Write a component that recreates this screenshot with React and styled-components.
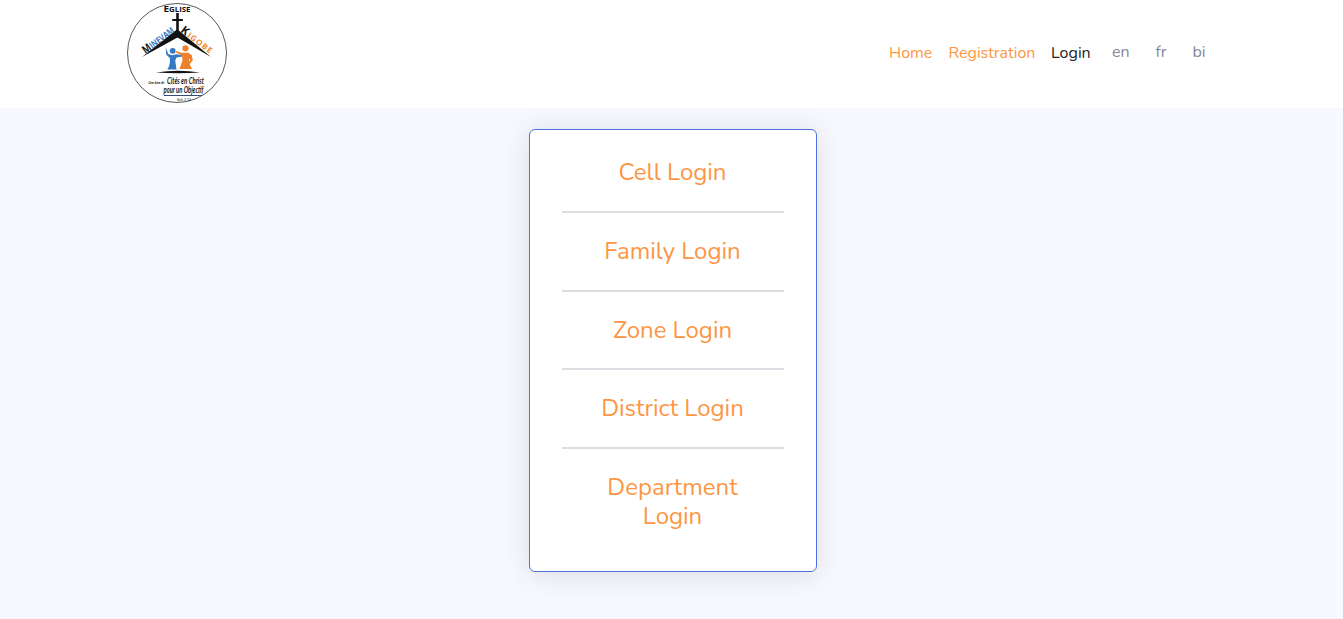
import React from "react";
import styled, { createGlobalStyle } from "styled-components";

const GlobalStyle = createGlobalStyle`
  * { box-sizing: border-box; }
  html, body { margin: 0; background: #f8f9ff; }
  body { font-family: Nunito, Lato, sans-serif; overflow: hidden; }
`;
const Page = styled.div`
  min-height: 619px;
  background: #f8f9ff;
`;
const Header = styled.header`
  height: 108px;
  padding: 3px 128px 0 127px;
  display: flex;
  justify-content: space-between;
  background: #fff;
`;
const Logo = styled.svg`
  display: block;
  width: 100px;
  height: 100px;
`;
const Nav = styled.nav`
  display: flex;
  align-items: flex-start;
  padding-top: 38px;
  width: 326px;
`;
const NavLink = styled.a`
  font-size: 16px;
  line-height: 24px;
  width: ${(p) => p.$width}px;
  color: ${(p) => p.$color || "#fd9644"};
  white-space: nowrap;
  text-decoration: none;
`;
const Language = styled(NavLink)`
  line-height: 22px;
  color: #858796;
`;
const Main = styled.main`
  display: flex;
  justify-content: center;
  padding: 21px 0 0 3px;
`;
const Card = styled.section`
  width: 288px;
  height: 443px;
  padding: 4px 32px 16px;
  border: 1px solid #4e73df;
  border-radius: 6px;
  background: #fff;
  box-shadow: 0 2.4px 28px rgba(58, 59, 69, 0.15);
`;
const LoginOption = styled.h4`
  margin: 0;
  padding: 24px 25px 24px 24px;
  border-bottom: ${(p) => (p.$last ? "0" : "2px solid #dddde3")};
  color: #fd9644;
  font-size: 24px;
  font-weight: 400;
  line-height: 28.8px;
  text-align: center;
`;

function ChurchLogo() {
  return (
    <Logo viewBox="0 0 100 100" aria-label="Eglise Minevam Kigobe">
      <circle cx="50" cy="50" r="49.5" fill="#fff" stroke="#444" strokeWidth="0.9" />
      <path d="M49.2 10h2.6v6h4v2h-4v9.5L84 54 50.5 34.5 15 54 49.2 27V18h-4v-2h4z" fill="#111" />
      <g fontFamily="'Open Sans', sans-serif" fontWeight="700">
        <text x="36.5" y="9.3" fill="#111" fontSize="9.5" textLength="27" lengthAdjust="spacingAndGlyphs">E<tspan fontSize="7.5">GLISE</tspan></text>
        <text transform="translate(18.5 51) rotate(-37)" fontSize="11" fill="#111" textLength="37" lengthAdjust="spacingAndGlyphs">M<tspan fontSize="9" fill="#3478bd">INEVAM</tspan></text>
        <text transform="translate(53 28.5) rotate(37)" fontSize="11" fill="#111" textLength="37" lengthAdjust="spacing">K<tspan fontSize="8" fill="#ee8b32">IGOBE</tspan></text>
      </g>
      <circle cx="45.7" cy="47.8" r="2.9" fill="#3479c1" />
      <path d="M38.7 44.5 41.3 51l4 1.2 4-1 6 1 .3 1.2-6 1.2-1.4 3L49.5 66.5h-9.3q3.6-5 2.6-11.5l-3.6-3.5z" fill="#3479c1" />
      <circle cx="58.5" cy="45.3" r="3.1" fill="#ee812b" />
      <path d="m49 48 5.5 1.8h6.8l3.5 2.5 1 5-2.8 3.5-1.5-.8 1.7-3-1.2-1.5q0 6 3.2 10.5H52.5l3-8.5-.5-5-6.5-3.3z" fill="#ee812b" />
      <path d="M29 69.5Q51 66 73 69.5 51 71 29 69.5" fill="#111" />
      <g fontFamily="Lato, sans-serif" fontStyle="italic" fill="#171717">
        <text x="21.5" y="80.7" fontSize="4.2" fontWeight="700" textLength="16" lengthAdjust="spacingAndGlyphs">Une âme dit</text>
        <text x="40" y="80.7" fontSize="9" fontWeight="700" textLength="37" lengthAdjust="spacingAndGlyphs">Cités en Christ</text>
        <text x="36.5" y="89.7" fontSize="9" fontWeight="700" textLength="40" lengthAdjust="spacingAndGlyphs">pour un Objectif</text>
        <text x="50" y="98" fontSize="4.5" textLength="14" lengthAdjust="spacingAndGlyphs">Eph. 2:14</text>
      </g>
      <path d="M37 92.5h38" stroke="#364d79" strokeWidth="1" />
    </Logo>
  );
}

const options = ["Cell Login", "Family Login", "Zone Login", "District Login", "Department Login"];

export default function App() {
  return (
    <>
      <GlobalStyle />
      <Page>
        <Header>
          <ChurchLogo />
          <Nav>
            <NavLink $width={59.5}>Home</NavLink>
            <NavLink $width={102.5}>Registration</NavLink>
            <NavLink $width={61} $color="#222">Login</NavLink>
            <Language $width={43.5}>en</Language>
            <Language $width={37}>fr</Language>
            <Language $width={15}>bi</Language>
          </Nav>
        </Header>
        <Main>
          <Card>
            {options.map((label, index) => (
              <LoginOption key={label} $last={index === options.length - 1}>{label}</LoginOption>
            ))}
          </Card>
        </Main>
      </Page>
    </>
  );
}
